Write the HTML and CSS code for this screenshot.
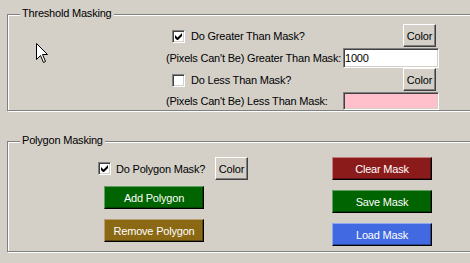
FILE: index.html
```
<!DOCTYPE html>
<html lang="en">
<head>
    <meta charset="UTF-8">
    <title>Mask Settings</title>
    <link rel="stylesheet" href="styles.css">
</head>
<body>

    <!-- Threshold group -->
    <div class="group">
        <span class="group-title">Threshold Masking</span>
        <div class="threshold-grid">
            <label class="check-row">
                <span class="check"><svg width="7" height="7" viewBox="0 0 7 7"><path d="M0 2v3l2 2h1l4-4V0L2.5 4.5z" fill="#000"/></svg></span>
                Do Greater Than Mask?
            </label>
            <button class="btn-color">Color</button>
            <span class="field-label">(Pixels Can't Be) Greater Than Mask:</span>
            <input class="field" type="text" value="1000">
            <label class="check-row">
                <span class="check"></span>
                Do Less Than Mask?
            </label>
            <button class="btn-color">Color</button>
            <span class="field-label">(Pixels Can't Be) Less Than Mask:</span>
            <input class="field field-pink" type="text" value="">
        </div>
    </div>

    <!-- Polygon group -->
    <div class="group group-polygon">
        <span class="group-title">Polygon Masking</span>
        <div class="polygon-body">
            <div class="polygon-left">
                <div class="check-line">
                    <label class="check-row">
                        <span class="check"><svg width="7" height="7" viewBox="0 0 7 7"><path d="M0 2v3l2 2h1l4-4V0L2.5 4.5z" fill="#000"/></svg></span>
                        Do Polygon Mask?
                    </label>
                    <button class="btn-color">Color</button>
                </div>
                <button class="btn btn-green btn-add">Add Polygon</button>
                <button class="btn btn-brown btn-remove">Remove Polygon</button>
            </div>
            <div class="polygon-right">
                <button class="btn btn-red">Clear Mask</button>
                <button class="btn btn-green">Save Mask</button>
                <button class="btn btn-blue">Load Mask</button>
            </div>
        </div>
    </div>

    <svg class="cursor" width="13" height="21" viewBox="0 0 13 21">
        <path d="M0.5 0.5V16.5L4.5 12.5L7.5 19.5L9.5 18.5L6.5 11.5H11.5Z" fill="#fff" stroke="#000" stroke-width="1"/>
    </svg>

</body>
</html>
```

FILE: styles.css
```
:root {
    --face: #D4D0C8;
    --shadow: #808080;
    --dark: #404040;
    --font: "Liberation Sans", Arial, sans-serif;
}

body {
    margin: 0;
    padding: 14px 0 0 7px;
    height: 263px;
    box-sizing: border-box;
    overflow: hidden;
    position: relative;
    background: var(--face);
    font-family: var(--font);
    font-size: 11px;
    letter-spacing: -0.2px;
    color: #000;
}

button, input {
    font: inherit;
    letter-spacing: inherit;
}

/* etched group box */
.group {
    position: relative;
    width: 480px;
    border: 1px solid var(--shadow);
    box-shadow: 1px 1px 0 #fff, inset 1px 1px 0 #fff;
}

.group-title {
    position: absolute;
    top: -8px;
    left: 12px;
    padding: 0 2px;
    line-height: 13px;
    background: var(--face);
}

.group-polygon {
    margin-top: 30px;
}

/* threshold rows */
.threshold-grid {
    display: grid;
    grid-template-columns: 177px 96px;
    grid-template-rows: 24px 20px 24px 18px;
    margin-left: 158px;
    padding-top: 9px;
    align-items: center;
}

.check-row {
    display: flex;
    align-items: center;
    gap: 6px;
    padding-left: 6px;
    white-space: nowrap;
}

.check {
    width: 13px;
    height: 13px;
    box-sizing: border-box;
    flex: none;
    display: flex;
    align-items: center;
    justify-content: center;
    background: #fff;
    border: 1px solid;
    border-color: var(--shadow) #fff #fff var(--shadow);
    box-shadow: inset 1px 1px 0 var(--dark), inset -1px -1px 0 var(--face);
}

.field-label {
    white-space: nowrap;
}

.field {
    width: 96px;
    height: 100%;
    box-sizing: border-box;
    margin: 0;
    padding: 0 1px;
    background: #fff;
    border: 1px solid;
    border-color: var(--shadow) #fff #fff var(--shadow);
    box-shadow: inset 1px 1px 0 var(--dark), inset -1px -1px 0 var(--face);
    outline: none;
}

.field-pink {
    background: #FFC0CB;
}

.btn-color {
    justify-self: end;
    align-self: start;
    width: 33px;
    height: 23px;
    margin: 0 3px 0 0;
    padding: 0;
    background: var(--face);
    border: 1px solid;
    border-color: #fff var(--dark) var(--dark) #fff;
    box-shadow: inset -1px -1px 0 var(--shadow);
    color: #000;
}

/* polygon section */
.polygon-body {
    display: flex;
    padding: 15px 0 5px 90px;
}

.polygon-left {
    display: flex;
    flex-direction: column;
    width: 150px;
}

.check-line {
    display: flex;
    align-items: center;
    height: 23px;
}

.check-line .check-row {
    padding-left: 0;
    gap: 5px;
}

.check-line .btn-color {
    margin: 0 0 0 auto;
}

.polygon-right {
    display: flex;
    flex-direction: column;
    gap: 10px;
    margin-left: 84px;
}

.btn {
    width: 100px;
    height: 23px;
    margin: 0;
    padding: 0;
    color: #fff;
    border: 1px solid;
    box-shadow: inset -1px -1px 0 rgba(0, 0, 0, 0.35);
}

.btn-add {
    margin: 6px 0 0 6px;
}

.btn-remove {
    margin: 10px 0 0 6px;
}

.btn-red {
    background: #8B1A1A;
    border-color: #C08080 #000 #000 #C08080;
}

.btn-green {
    background: #006400;
    border-color: #60A060 #000 #000 #60A060;
}

.btn-brown {
    background: #8B6914;
    border-color: #B8A070 #000 #000 #B8A070;
}

.btn-blue {
    background: #4169E1;
    border-color: #90A8F0 #000 #000 #90A8F0;
}

.cursor {
    position: absolute;
    left: 36px;
    top: 43px;
}
```
